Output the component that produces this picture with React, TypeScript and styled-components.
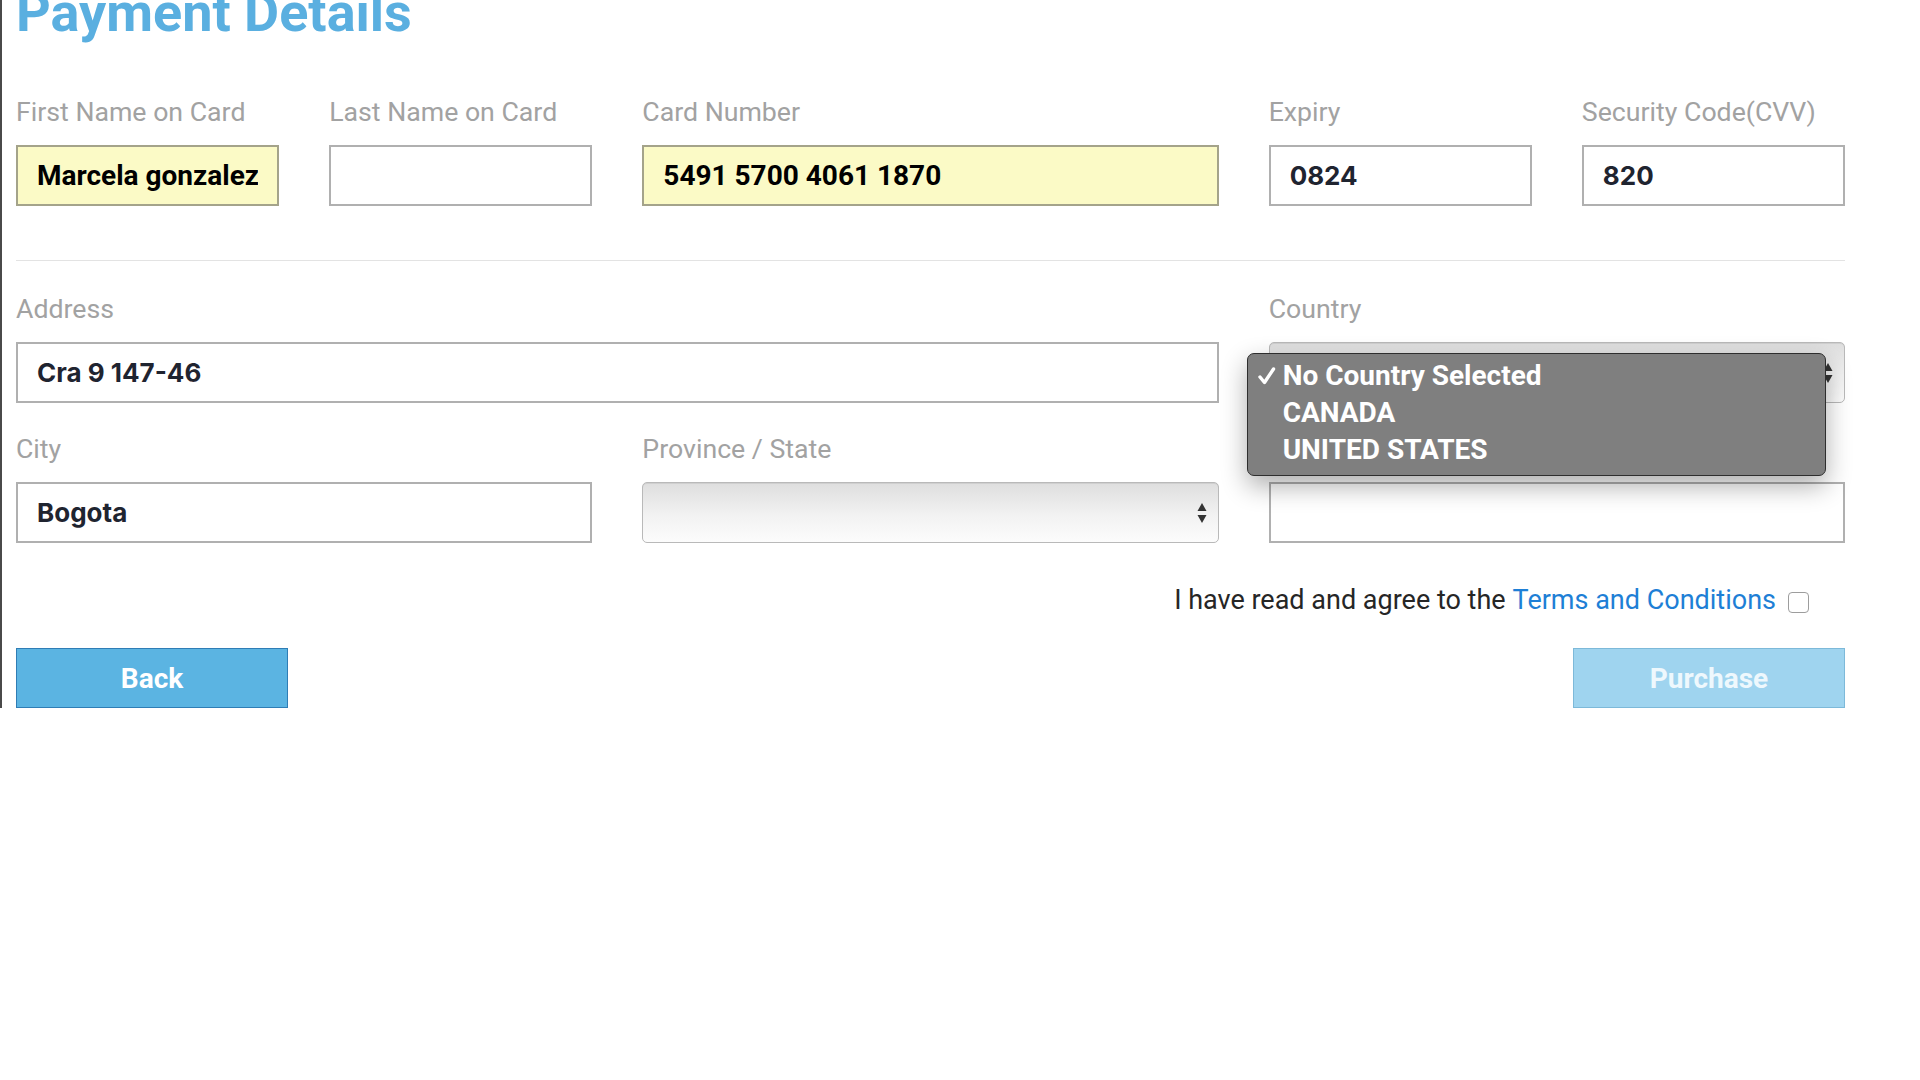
import React from "react";
import styled, { createGlobalStyle } from "styled-components";

const GlobalStyle = createGlobalStyle`
  html, body { margin: 0; padding: 0; background: #ffffff; }
  body { font-family: Roboto, "Noto Sans", sans-serif; overflow: hidden; }
  * { box-sizing: border-box; }
`;

const Page = styled.div`
  width: 1920px;
  height: 1080px;
  overflow: hidden;
  background: #ffffff;
`;

const Panel = styled.div`
  width: 1845px;
  border-left: 2px solid #4a4a4a;
  padding-left: 14px;
  display: flex;
  flex-direction: column;
`;

const Title = styled.h1`
  margin: -14px 0 0;
  font: 700 54px/54px Roboto, sans-serif;
  color: #5aafe0;
`;

const Grid = styled.div<{ $mt: number }>`
  display: grid;
  grid-template-columns: repeat(6, 1fr);
  column-gap: 50px;
  row-gap: 31px;
  margin-top: ${(p) => p.$mt}px;
`;

const Field = styled.div<{ $span: number }>`
  grid-column: span ${(p) => p.$span};
  display: flex;
  flex-direction: column;
  gap: 18px;
`;

const Label = styled.label`
  font: 400 26.7px/30px Roboto, sans-serif;
  color: #a2a2a2;
  white-space: nowrap;
`;

const TextInput = styled.input<{ $autofill?: boolean }>`
  width: 100%;
  height: 61px;
  padding: 0 19px;
  outline: none;
  border: 2px solid ${(p) => (p.$autofill ? "#a4a38a" : "#b0b0b0")};
  background: ${(p) => (p.$autofill ? "#fbfac6" : "#ffffff")};
  color: ${(p) => (p.$autofill ? "#000000" : "#1f2430")};
  font: ${(p) =>
    p.$autofill
      ? "700 28px Roboto, sans-serif"
      : "700 26px Inter, Roboto, sans-serif"};
`;

const Divider = styled.hr`
  width: 100%;
  margin: 54px 0 0;
  border: 0;
  border-top: 1px solid #e3e3e3;
`;

const SelectBox = styled.div`
  position: relative;
  height: 61px;
  border: 1px solid #b9b9b9;
  border-radius: 5px;
  background: linear-gradient(#dedede, #f2f2f2 55%, #fcfcfc);
  box-shadow: inset 0 1px 0 #cfcfcf;
  display: flex;
  align-items: center;
  justify-content: flex-end;
  padding-right: 11px;
`;

const Popup = styled.ul`
  position: absolute;
  left: -23px;
  top: 10px;
  width: 579px;
  margin: 0;
  padding: 3px 0 7px;
  list-style: none;
  background: #7f7f7f;
  border: 1px solid #2e2e2e;
  border-radius: 7px;
  box-shadow: 0 10px 26px rgba(0, 0, 0, 0.32);
  z-index: 5;
`;

const PopupItem = styled.li`
  position: relative;
  height: 37px;
  display: flex;
  align-items: center;
  padding-left: 35px;
  font: 700 28px Roboto, sans-serif;
  color: #ffffff;
  white-space: nowrap;
`;

const Check = styled.svg`
  position: absolute;
  left: 10px;
  top: 9px;
`;

const TermsRow = styled.div`
  margin-top: 42px;
  padding-right: 36px;
  display: flex;
  justify-content: flex-end;
  align-items: center;
  font: 400 27px/30px Roboto, sans-serif;
  color: #262626;
`;

const TermsLink = styled.a`
  color: #1e7fd6;
  text-decoration: none;
  margin-left: 7px;
`;

const CheckBox = styled.input`
  appearance: none;
  width: 21px;
  height: 21px;
  margin: 4px 0 0 12px;
  border: 1.5px solid #9d9d9d;
  border-radius: 4px;
  background: #ffffff;
`;

const ButtonRow = styled.div`
  margin-top: 33px;
  display: flex;
  justify-content: space-between;
`;

const Button = styled.button<{ $muted?: boolean }>`
  width: 272px;
  height: 60px;
  font: 700 28px Roboto, sans-serif;
  color: ${(p) => (p.$muted ? "#eef8fd" : "#ffffff")};
  background: ${(p) => (p.$muted ? "#9fd4ef" : "#5bb4e2")};
  border: 1px solid ${(p) => (p.$muted ? "#7db9d9" : "#2f7db5")};
  cursor: pointer;
`;

const Arrows = () => (
  <svg width="10" height="22" viewBox="0 0 10 22">
    <path d="M5 1 L9.5 9 L0.5 9 Z" fill="#333" />
    <path d="M5 21 L9.5 13 L0.5 13 Z" fill="#333" />
  </svg>
);

export default function App() {
  return (
    <Page>
      <GlobalStyle />
      <Panel>
        <Title>Payment Details</Title>
        <Grid $mt={57}>
          <Field $span={1}>
            <Label>First Name on Card</Label>
            <TextInput $autofill readOnly value="Marcela gonzalez" />
          </Field>
          <Field $span={1}>
            <Label>Last Name on Card</Label>
            <TextInput readOnly value="" />
          </Field>
          <Field $span={2}>
            <Label>Card Number</Label>
            <TextInput $autofill readOnly value="5491 5700 4061 1870" />
          </Field>
          <Field $span={1}>
            <Label>Expiry</Label>
            <TextInput readOnly value="0824" />
          </Field>
          <Field $span={1}>
            <Label>Security Code(CVV)</Label>
            <TextInput readOnly value="820" />
          </Field>
        </Grid>
        <Divider />
        <Grid $mt={33}>
          <Field $span={4}>
            <Label>Address</Label>
            <TextInput readOnly value="Cra 9 147-46" />
          </Field>
          <Field $span={2}>
            <Label>Country</Label>
            <SelectBox>
              <Arrows />
              <Popup>
                <PopupItem>
                  <Check width="18" height="20" viewBox="0 0 18 20">
                    <path
                      d="M2 11 L6.5 16.5 L15.5 3"
                      fill="none"
                      stroke="#ffffff"
                      strokeWidth="3.4"
                      strokeLinecap="round"
                      strokeLinejoin="round"
                    />
                  </Check>
                  No Country Selected
                </PopupItem>
                <PopupItem>CANADA</PopupItem>
                <PopupItem>UNITED STATES</PopupItem>
              </Popup>
            </SelectBox>
          </Field>
          <Field $span={2}>
            <Label>City</Label>
            <TextInput readOnly value="Bogota" />
          </Field>
          <Field $span={2}>
            <Label>Province / State</Label>
            <SelectBox>
              <Arrows />
            </SelectBox>
          </Field>
          <Field $span={2}>
            <Label>{"\u00a0"}</Label>
            <TextInput readOnly value="" />
          </Field>
        </Grid>
        <TermsRow>
          I have read and agree to the
          <TermsLink href="#">Terms and Conditions</TermsLink>
          <CheckBox type="checkbox" />
        </TermsRow>
        <ButtonRow>
          <Button>Back</Button>
          <Button $muted>Purchase</Button>
        </ButtonRow>
      </Panel>
    </Page>
  );
}
